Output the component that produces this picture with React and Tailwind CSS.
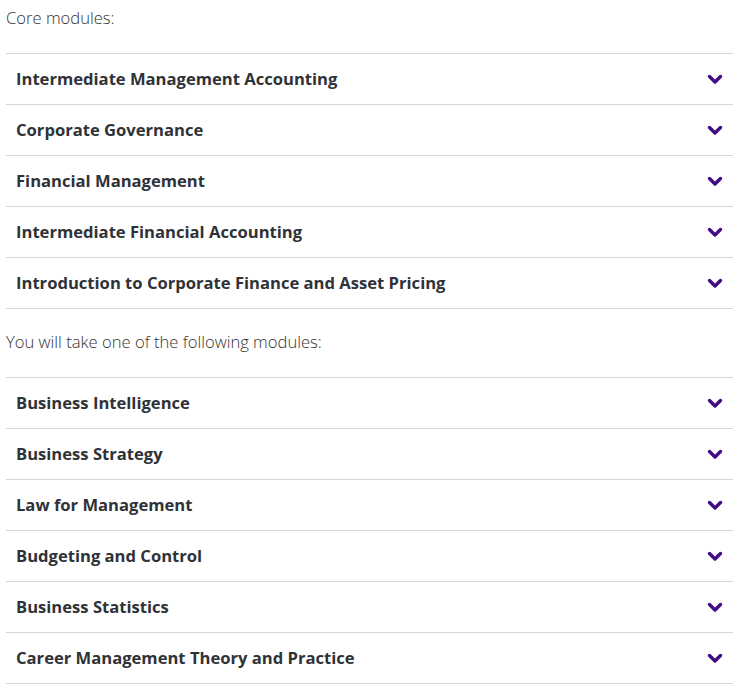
const coreModules = [
  'Intermediate Management Accounting',
  'Corporate Governance',
  'Financial Management',
  'Intermediate Financial Accounting',
  'Introduction to Corporate Finance and Asset Pricing',
];

const optionalModules = [
  'Business Intelligence',
  'Business Strategy',
  'Law for Management',
  'Budgeting and Control',
  'Business Statistics',
  'Career Management Theory and Practice',
];

function Chevron() {
  return (
    <svg width="16" height="11" viewBox="0 0 16 11" className="shrink-0">
      <path
        d="M2.5 2.5 L8 8 L13.5 2.5"
        fill="none"
        stroke="#430c85"
        strokeWidth="3.4"
        strokeLinecap="round"
        strokeLinejoin="round"
      />
    </svg>
  );
}

function ModuleList({ items }) {
  return (
    <div className="border-b border-[#d6d6d6]">
      {items.map((title) => (
        <button
          key={title}
          className="w-full h-[51px] flex items-center justify-between border-t border-[#d6d6d6] pl-[10px] pr-[10px] text-left"
        >
          <span className="text-[16.6px] font-bold text-[#2f3237]">{title}</span>
          <Chevron />
        </button>
      ))}
    </div>
  );
}

export default function App() {
  return (
    <div
      className="bg-white w-[739px] h-[690px] px-[6px] pt-[6px]"
      style={{ fontFamily: '"Open Sans", Lato, sans-serif' }}
    >
      <p className="text-[16.6px] leading-[24px] font-light text-[#333] mb-[23px]">Core modules:</p>
      <ModuleList items={coreModules} />
      <p className="text-[16.6px] leading-[24px] font-light text-[#333] mt-[21px] mb-[23px]">
        You will take one of the following modules:
      </p>
      <ModuleList items={optionalModules} />
    </div>
  );
}
